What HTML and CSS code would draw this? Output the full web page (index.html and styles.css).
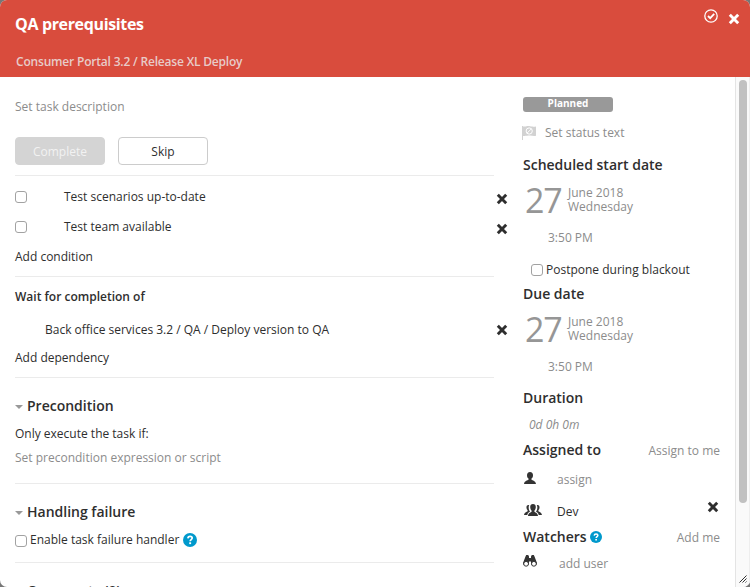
FILE: index.html
```html
<!DOCTYPE html>
<html lang="en">
<head>
<meta charset="utf-8">
<title>QA prerequisites</title>
<link rel="stylesheet" href="styles.css">
</head>
<body>
<svg class="defs" width="0" height="0">
  <symbol id="x" viewBox="0 0 12 12"><path d="M1.800 1.800l8.400 8.400M10.200 1.800l-8.400 8.400" stroke="currentColor" stroke-width="2.900" fill="none"/></symbol>
  <symbol id="help" viewBox="0 0 14 14"><circle cx="7" cy="7" r="7" fill="#0099cc"/><path d="M4.9 5.4C5 3.9 6 3.4 7.1 3.4c1.200 0 2.100.7 2.100 1.700 0 1.500-2 1.500-2 3.100" fill="none" stroke="#fff" stroke-width="1.700"/><rect x="6.200" y="9.300" width="1.900" height="1.800" fill="#fff"/></symbol>
</svg>
<div class="modal">
  <header class="head">
    <div>
      <h1>QA prerequisites</h1>
      <div class="crumb">Consumer Portal 3.2 / Release XL Deploy</div>
    </div>
    <div class="actions">
      <svg class="check" viewBox="0 0 14 14" fill="none" stroke="#fff"><circle cx="7" cy="7" r="6.200" stroke-width="1.300"/><path d="M4 7l2.200 2.200L10.200 4.900" stroke-width="1.800"/></svg>
      <svg class="close"><use href="#x"/></svg>
    </div>
  </header>
  <div class="body">
    <main class="main">
      <div class="row muted desc">Set task description</div>
      <div class="buttons"><button class="btn off">Complete</button><button class="btn">Skip</button></div>
      <section class="conditions">
        <div class="row cond"><i class="box"></i><span>Test scenarios up-to-date</span><svg class="del"><use href="#x"/></svg></div>
        <div class="row cond"><i class="box"></i><span>Test team available</span><svg class="del"><use href="#x"/></svg></div>
        <div class="row">Add condition</div>
      </section>
      <section class="wait">
        <div class="row strong">Wait for completion of</div>
        <div class="row dep"><span>Back office services 3.2 / QA / Deploy version to QA</span><svg class="del"><use href="#x"/></svg></div>
        <div class="row">Add dependency</div>
      </section>
      <section class="pre">
        <h2><i class="caret"></i>Precondition</h2>
        <div class="row">Only execute the task if:</div>
        <div class="row muted expr">Set precondition expression or script</div>
      </section>
      <section class="failure">
        <h2><i class="caret"></i>Handling failure</h2>
        <div class="row enable"><i class="box"></i><span>Enable task failure handler</span><svg class="help"><use href="#help"/></svg></div>
      </section>
      <section class="comments"><h2><i class="caret"></i>Comments (0)</h2></section>
    </main>
    <aside class="side">
      <div class="badge">Planned</div>
      <div class="row muted status">
        <svg class="flag" viewBox="0 0 14 14"><path d="M0 0h1v14H0zM1 .5C4 1 5-.3 8 .2s4 .6 6 .3v9.300c-2 .5-4 0-6-.2s-4 .6-7 .3z" fill="#d2d2d2"/><circle cx="7.200" cy="5" r="3.100" fill="none" stroke="#fff"/><path d="M5 7.200l4.400-4.400" stroke="#fff"/></svg>
        <span>Set status text</span>
      </div>
      <h3 class="h-start">Scheduled start date</h3>
      <div class="date"><b>27</b><span>June 2018<br>Wednesday</span></div>
      <div class="row muted time">3:50 PM</div>
      <div class="row postpone"><i class="box"></i><span>Postpone during blackout</span></div>
      <h3 class="h-due">Due date</h3>
      <div class="date"><b>27</b><span>June 2018<br>Wednesday</span></div>
      <div class="row muted time">3:50 PM</div>
      <h3 class="h-duration">Duration</h3>
      <div class="row muted duration">0d 0h 0m</div>
      <div class="split assigned"><h3>Assigned to</h3><span>Assign to me</span></div>
      <div class="row person muted">
        <svg class="user" viewBox="0 0 12 12"><path d="M6 0c2 0 3 1.300 3 3.200C9 5 8.300 6 7.500 6.600v1.200c1 .7 4.200 1 4.500 4.200H0c.3-3.200 3.500-3.500 4.500-4.200V6.600C3.700 6 3 5 3 3.200 3 1.300 4 0 6 0z" fill="#333"/></svg><span>assign</span>
      </div>
      <div class="row person team">
        <svg class="group" viewBox="0 0 18 12"><g fill="#333"><path d="M5.200 1C3.400.6 2.300 1.700 2.500 3.700c.1 1.500.7 2 1.100 2.500v1C2.800 7.900.3 8.300 0 11h3.300c.2-2 1.500-2.700 2.700-3.300-1.500-2-1.700-4.700-.8-6.700zM12.800 1c1.800-.4 2.900.7 2.700 2.700-.1 1.500-.7 2-1.100 2.500v1c.8.7 3.300 1.100 3.600 3.800h-3.300c-.2-2-1.500-2.700-2.700-3.300 1.500-2 1.700-4.700.8-6.700z"/><path d="M9 0c1.900 0 2.900 1.300 2.800 3.300-.1 1.700-.7 2.700-1.400 3.300v1.200c.9.8 3.400 1.200 3.600 4.200H4c.2-3 2.700-3.400 3.600-4.200V6.600C6.900 6 6.300 5 6.200 3.300 6.100 1.300 7.100 0 9 0z"/></g></svg><span>Dev</span><svg class="del"><use href="#x"/></svg>
      </div>
      <div class="split watchers"><h3>Watchers</h3><svg class="help"><use href="#help"/></svg><span>Add me</span></div>
      <div class="row person muted watch">
        <svg class="bino" viewBox="0 0 14 12"><path d="M2.500 1.500L3.200 0h2L6 1.500V3h2V1.500L8.800 0h2l.7 1.500L14 8v1.500H8V6.500H6v3H0V8z" fill="#333"/><g fill="#fff" stroke="#333" stroke-width="1"><circle cx="3.100" cy="8.800" r="2.400"/><circle cx="10.900" cy="8.800" r="2.400"/></g></svg><span>add user</span>
      </div>
    </aside>
    <div class="scroll">
      <div class="thumb"></div>
      <svg class="grip" viewBox="0 0 8 8" stroke="#333"><path d="M.5 7.500l7-7M3.500 7.500l4-4M6.500 7.500l1-1"/></svg>
    </div>
  </div>
</div>
</body>
</html>
```

FILE: styles.css
```css
* { box-sizing: border-box; margin: 0; padding: 0; }
html, body { height: 100%; overflow: hidden; }
body { background: #777; font: 12px/20px "Open Sans", "Noto Sans", sans-serif; color: #2e2e2e; }
svg { display: block; flex: none; }
.defs { position: absolute; }
.modal { height: 587px; display: flex; flex-direction: column; border-radius: 7px; overflow: hidden; background: #fff; }
.head { height: 77px; flex: none; background: #d94c3d; color: #fff; display: flex; justify-content: space-between; padding: 14px 10px 0 15px; }
h1 { font-size: 16px; line-height: 20px; font-weight: 700; letter-spacing: -0.35px; }
.crumb { margin: 18px 0 0 1px; color: #e8cbc8; font-weight: 600; letter-spacing: -0.19px; }
.actions { display: flex; gap: 10px; }
.check { width: 14px; height: 14px; margin-top: -5px; }
.close { width: 12px; height: 12px; margin-top: -1px; }
.body { flex: 1; min-height: 0; display: grid; grid-template-columns: 508px 227px 15px; overflow: hidden; }
.row { height: 20px; padding-top: 2px; display: flex; align-items: center; white-space: nowrap; }
.muted { color: #8c8c8c; }
.strong { font-weight: 600; }
.main { padding: 19px 0 0 15px; min-height: 0; }
.buttons { display: flex; gap: 13px; margin: 21px 0 10px; }
.btn { width: 90px; height: 28px; padding-top: 2px; border: 1px solid #ccc; border-radius: 4px; background: #fff; font: inherit; color: #2e2e2e; }
.btn.off { background: #d4d4d4; border-color: #d4d4d4; color: #f2f2f2; }
section { width: 479px; border-top: 1px solid #ebebeb; }
.box { width: 12px; height: 12px; border: 1px solid #a2a2a2; border-radius: 3px; background: #fff; flex: none; }
.conditions { height: 101px; padding-top: 10px; }
.cond { margin-bottom: 10px; width: 493px; }
.cond span { margin-left: 37px; }
.del { width: 12px; height: 12px; margin: 4px 0 0 auto; }
.wait { height: 101px; padding-top: 9px; }
.dep { margin: 13px 0 8px; padding-left: 30px; width: 493px; }
.dep .del { margin-top: 0; }
.pre { height: 106px; padding-top: 18px; }
h2, h3 { font-size: 14px; line-height: 20px; font-weight: 600; height: 20px; white-space: nowrap; }
h2 { display: flex; align-items: center; margin-bottom: 7px; }
.caret { border: 4px solid transparent; border-top-color: #999; border-bottom: 0; margin-right: 4px; margin-top: 2px; }
.expr { margin-top: 4px; }
.failure { height: 79px; padding-top: 18px; }
.enable span { margin-left: 3px; }
.enable .box { margin-top: 1px; }
.enable .help { width: 14px; height: 14px; margin-left: 4px; }
.comments { padding-top: 18px; }
.side { padding: 20px 15px 0 15px; min-height: 0; }
.badge { width: 90px; height: 15px; border-radius: 3px; background: #999; color: #fff; font-size: 10px; line-height: 13px; font-weight: 700; text-align: center; }
.status { margin-top: 10px; }
.flag { width: 14px; height: 14px; margin: 0 9px 0 -1px; }
.h-start { margin-top: 13px; }
.date { display: flex; margin: 11px 0 0 2px; height: 28px; color: #8c8c8c; align-items: center; }
.date b { width: 43px; font-size: 34px; line-height: 28px; font-weight: 500; color: #969696; letter-spacing: -1.2px; }
.date span { line-height: 14px; }
.time { margin: 13px 0 0 25px; }
.postpone { margin: 12px 0 0 8px; }
.postpone span { margin-left: 3px; }
.h-due { margin-top: 5px; }
.h-duration { margin-top: 12px; }
.duration { margin: 6px 0 0 6px; font-style: italic; }
.split { display: flex; height: 20px; white-space: nowrap; }
.split span { margin-left: auto; padding-top: 1px; color: #8c8c8c; }
.assigned { margin-top: 6px; }
.person { margin-top: 9px; }
.user { width: 12px; height: 12px; margin: -5px 21px 0 1px; }
.team { margin-top: 12px; }
.group { width: 18px; height: 12px; margin: -5px 15px 0 1px; }
.team .del { margin: -11px 1px 0 auto; }
.watchers { margin-top: 6px; }
.watchers .help { width: 12px; height: 12px; margin: 4px 0 0 3px; }
.watch { margin-top: 6px; }
.bino { width: 14px; height: 12px; margin: -7px 22px 0 0; }
.scroll { background: #fafafa; border-left: 1px solid #e4e4e4; border-right: 1px solid #eee; display: flex; flex-direction: column; justify-content: space-between; padding: 3px 2px 4px 3px; }
.thumb { width: 8px; height: 423px; border-radius: 4px; background: #c1c1c1; }
.grip { width: 8px; height: 8px; }
```
